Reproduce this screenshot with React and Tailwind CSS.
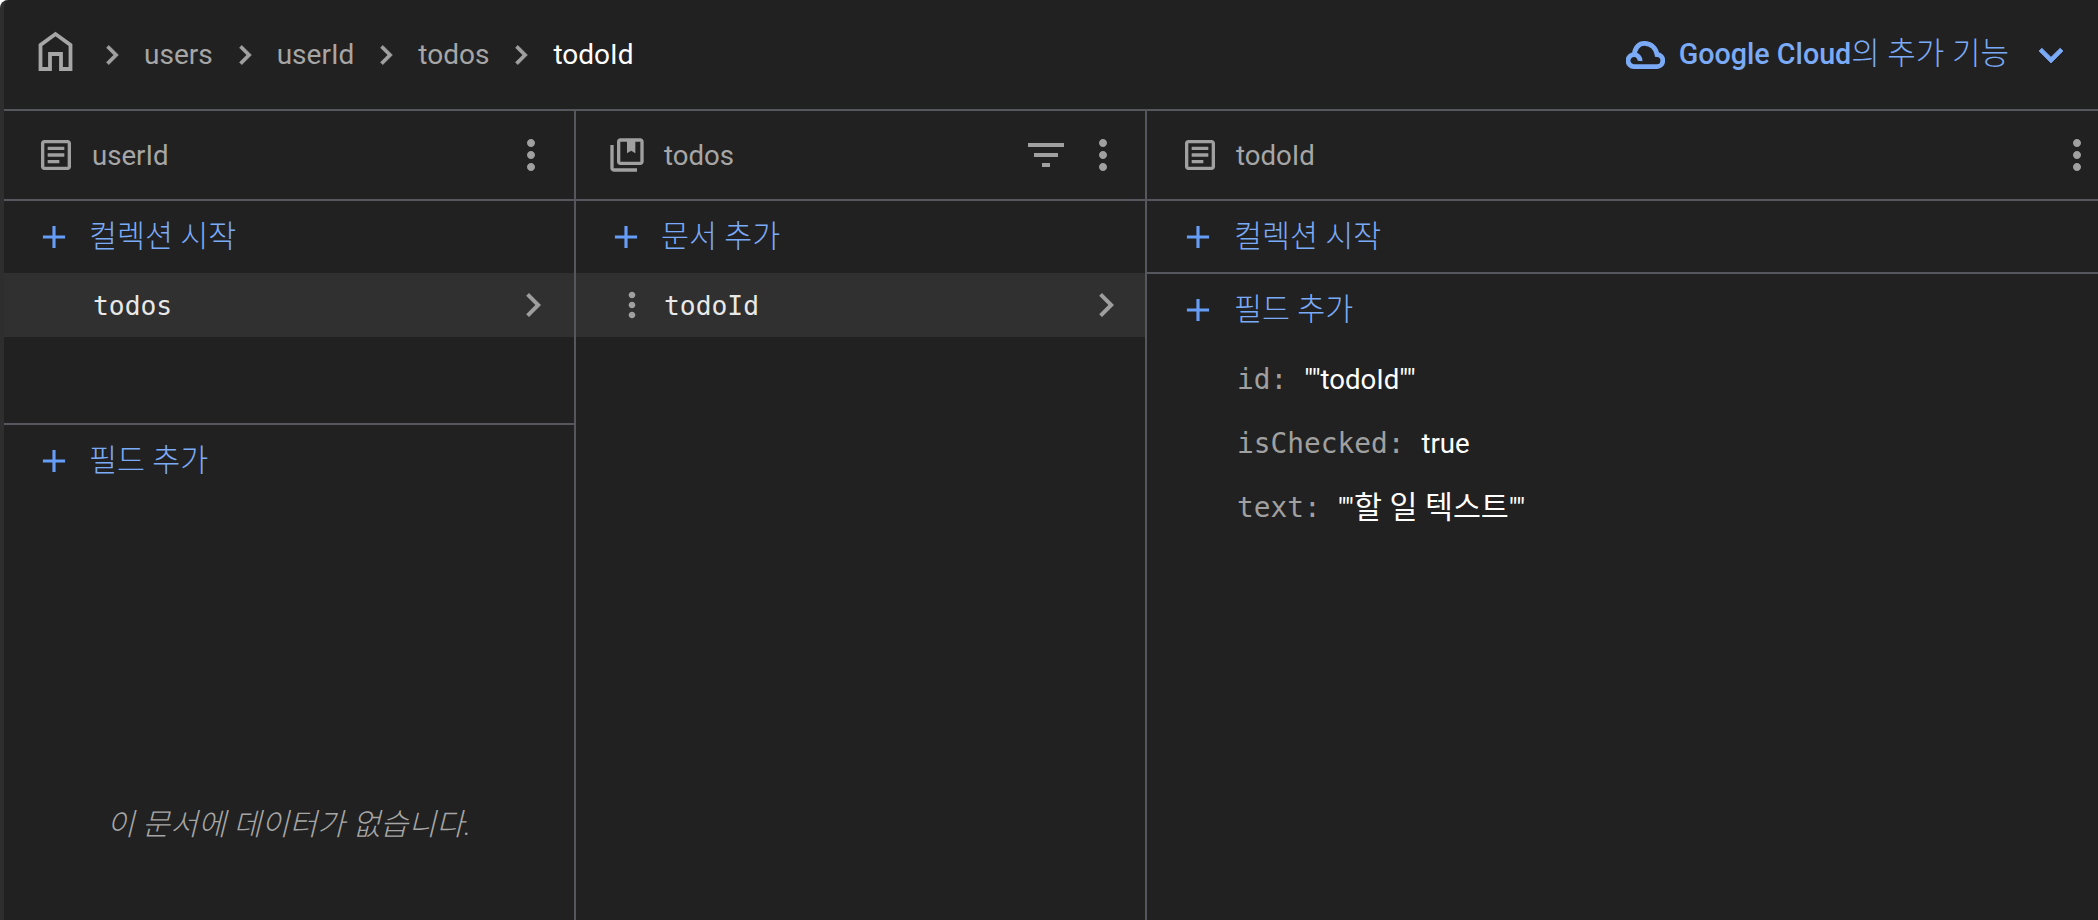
const MATERIAL = {
  article: 'M19 5v14H5V5h14m0-2H5c-1.1 0-2 .9-2 2v14c0 1.1.9 2 2 2h14c1.1 0 2-.9 2-2V5c0-1.1-.9-2-2-2zM14 17H7v-2h7v2zm3-4H7v-2h10v2zm0-4H7V7h10v2z',
  collection: 'M4 6H2v14c0 1.1.9 2 2 2h14v-2H4V6zM20 2H8c-1.1 0-2 .9-2 2v12c0 1.1.9 2 2 2h12c1.1 0 2-.9 2-2V4c0-1.1-.9-2-2-2zm0 14H8V4h4v7l2.5-1.5L17 11V4h3v12z',
  more: 'M12 8c1.1 0 2-.9 2-2s-.9-2-2-2-2 .9-2 2 .9 2 2 2zm0 2c-1.1 0-2 .9-2 2s.9 2 2 2 2-.9 2-2-.9-2-2-2zm0 6c-1.1 0-2 .9-2 2s.9 2 2 2 2-.9 2-2-.9-2-2-2z',
  filter: 'M10 18h4v-2h-4v2zM3 6v2h18V6H3zm3 7h12v-2H6v2z',
  chevron: 'M10 6 8.59 7.41 13.17 12l-4.58 4.59L10 18l6-6z',
  add: 'M19 13h-6v6h-2v-6H5v-2h6V5h2v6h6v2z',
  expand: 'M16.59 8.59 12 13.17 7.41 8.59 6 10l6 6 6-6z',
};

const Icon = ({ name, className }) => (
  <svg viewBox="0 0 24 24" fill="currentColor" className={`shrink-0 ${className}`}>
    <path d={MATERIAL[name]} />
  </svg>
);

const SANS = 'font-["Roboto","Noto_Sans_CJK_KR",sans-serif]';
const MONO = 'font-["DejaVu_Sans_Mono","Noto_Sans_CJK_KR",monospace]';

function Crumb({ children, active }) {
  return (
    <>
      <Icon name="chevron" className="w-[38px] h-[38px] text-[#a0a0a0] stroke-current stroke-[0.5] mx-[-1px]" />
      <span className={active ? 'text-white' : 'text-[#a6a6a6]'}>{children}</span>
    </>
  );
}

function ColumnHeader({ icon, iconClass, title, filter, dotsClass }) {
  return (
    <div className="h-[90px] shrink-0 flex items-center border-b-2 border-[#55575c] text-[#a0a0a0]">
      <Icon name={icon} className={iconClass} />
      <span className="flex-1 text-[27.6px] text-[#a6a6a6] pt-[1px]">{title}</span>
      {filter && <Icon name="filter" className="w-12 h-12 mr-[9px]" />}
      <Icon name="more" className={`w-12 h-12 ${dotsClass}`} />
    </div>
  );
}

function AddRow({ label, className, offset = 'pl-[31px]', gap = 'gap-[16px]' }) {
  return (
    <div className={`flex items-center shrink-0 text-[#7baaf7] ${gap} ${offset} ${className}`}>
      <Icon name="add" className="w-[38px] h-[38px] text-[#669df6]" />
      <span className="text-[30.4px] font-light">{label}</span>
    </div>
  );
}

function SelectedRow({ label, dots }) {
  return (
    <div className={`h-16 shrink-0 flex items-center bg-[#303030] text-[#e8e8e8] ${MONO}`}>
      {dots ? <Icon name="more" className="w-10 h-10 ml-[36px] mr-[12px] text-[#a0a0a0]" /> : <div className="w-[89px]" />}
      <span className="flex-1 text-[26.3px] pt-[3px]">{label}</span>
      <Icon name="chevron" className={`w-12 h-12 text-[#9e9e9e] ${dots ? 'mr-[15px]' : 'mr-[17px]'}`} />
    </div>
  );
}

function Field({ name, value }) {
  return (
    <div className="h-16 flex items-center pl-[90px]">
      <span className={`text-[27.8px] text-[#a0a0a0] mr-[17px] ${MONO}`}>{name}:</span>
      <span className="text-[27.6px] text-white">{value}</span>
    </div>
  );
}

export default function App() {
  return (
    <div className={`h-[920px] w-[2098px] overflow-hidden bg-[#212121] border-l-4 border-[#2e2e2e] rounded-tl-lg flex flex-col ${SANS}`}>
      {/* breadcrumb bar */}
      <div className="h-[111px] shrink-0 flex items-center border-b-2 border-[#55575c]">
        <svg viewBox="0 0 36 40" className="w-9 h-10 ml-[33px] mr-[21px] mt-[-7px]" fill="none" stroke="#a6a6a6" strokeWidth="3.8">
          <path d="M3.5 38 V14 L18.5 3 L33.5 14 V38 H24 V23 H13 V38 Z" />
        </svg>
        <div className="flex items-center gap-[14px] text-[28px]">
          <Crumb>users</Crumb>
          <Crumb>userId</Crumb>
          <Crumb>todos</Crumb>
          <Crumb active>todoId</Crumb>
        </div>
        <div className="ml-auto flex items-center text-[#7baaf7] pr-[23px]">
          <svg viewBox="0 0 39 28" className="w-[39px] h-7 mr-[14px]" fill="none" stroke="#7baaf7" strokeWidth="4.8">
            <path d="M14 20 A6 6 0 1 0 8 25.600 H30.500 A6 6 0 0 0 31 13.500 C30 7 25 2.400 18.500 2.400 C13.500 2.400 9.500 5 8 14" />
          </svg>
          <span className="text-[28.7px] font-medium">Google Cloud</span>
          <span className="text-[31px] font-light">의 추가 기능</span>
          <Icon name="expand" className="w-12 h-12 ml-[18px] stroke-current stroke-[0.4]" />
        </div>
      </div>

      <div className="flex-1 flex min-h-0">
        {/* userId document */}
        <div className="w-[572px] shrink-0 flex flex-col border-r-2 border-[#55575c]">
          <ColumnHeader icon="article" iconClass="w-10 h-10 ml-[32px] mr-[16px]" title="userId" dotsClass="mr-[19px]" />
          <div className="h-[224px] shrink-0 border-b-2 border-[#55575c]">
            <AddRow label="컬렉션 시작" className="h-[72px]" />
            <SelectedRow label="todos" />
          </div>
          <AddRow label="필드 추가" className="h-[72px]" />
          <div className="flex-1 flex items-center justify-center pt-[232px]">
            <span className="italic text-[30.4px] font-light text-[#a6a6a6]">이 문서에 데이터가 없습니다.</span>
          </div>
        </div>

        {/* todos collection */}
        <div className="w-[571px] shrink-0 flex flex-col border-r-2 border-[#55575c]">
          <ColumnHeader icon="collection" iconClass="w-10 h-10 ml-[31px] mr-[17px]" title="todos" filter dotsClass="mr-[18px]" />
          <AddRow label="문서 추가" className="h-[72px]" />
          <SelectedRow label="todoId" dots />
        </div>

        {/* todoId document */}
        <div className="flex-1 min-w-0 flex flex-col">
          <ColumnHeader icon="article" iconClass="w-10 h-10 ml-[33px] mr-[16px]" title="todoId" dotsClass="mr-[-3px]" />
          <AddRow label="컬렉션 시작" className="h-[73px] border-b-2 border-[#55575c]" offset="pl-[32px]" gap="gap-[17px]" />
          <AddRow label="필드 추가" className="h-[72px]" offset="pl-[32px]" gap="gap-[17px]" />
          <div className="pt-[2px]">
            <Field name="id" value={'""todoId""'} />
            <Field name="isChecked" value="true" />
            <Field name="text" value={<>""<span className="text-[30.4px]">할 일 텍스트</span>""</>} />
          </div>
        </div>
      </div>
    </div>
  );
}
